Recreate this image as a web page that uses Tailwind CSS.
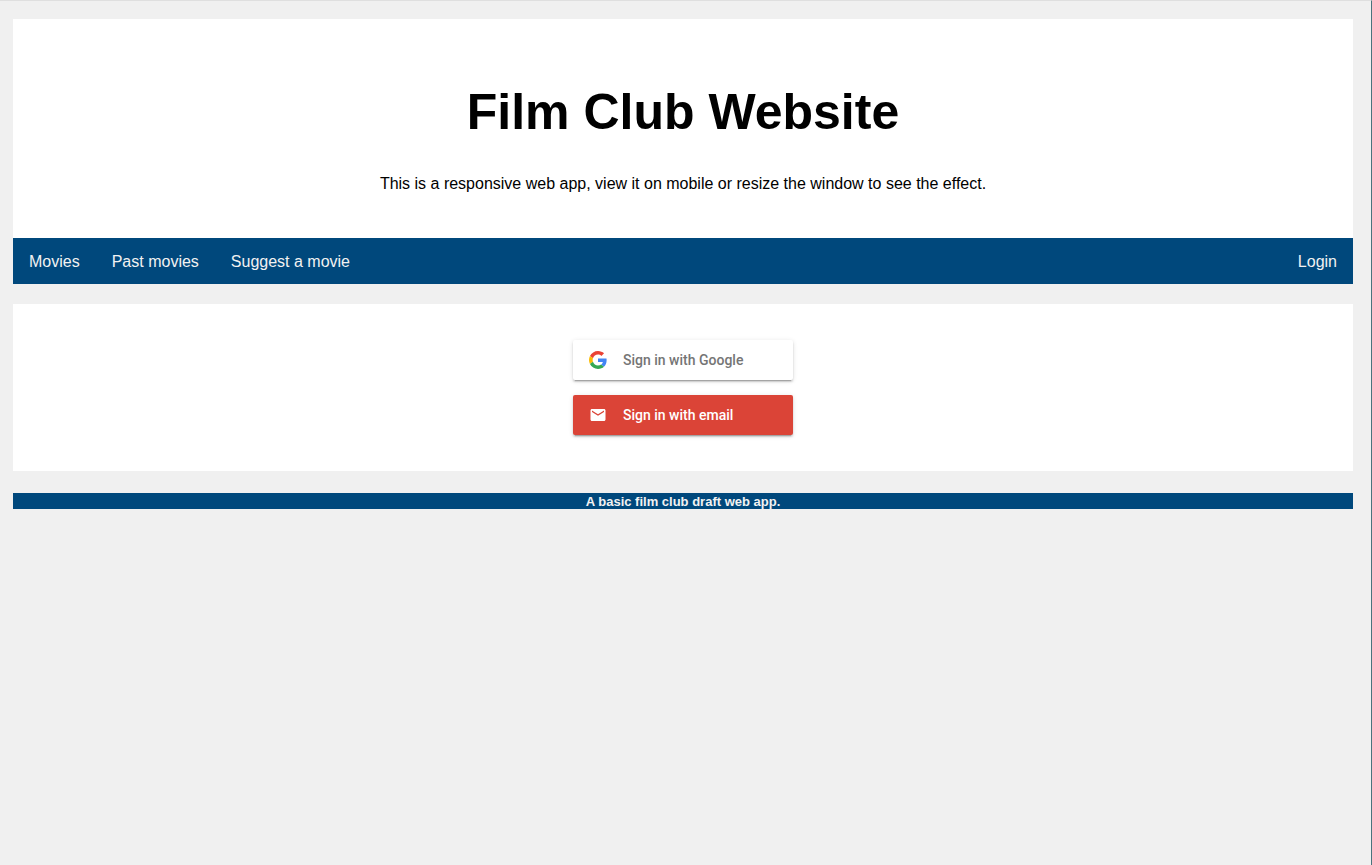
<!DOCTYPE html>
<html lang="en">
<head>
<meta charset="utf-8">
<meta name="viewport" content="width=device-width, initial-scale=1">
<title>Film Club Website</title>
<script src="https://cdn.jsdelivr.net/npm/@tailwindcss/browser@4"></script>
</head>
<body class="min-h-screen border-t border-r border-t-[#dfdfdf] border-r-[#4a737d] bg-[#f0f0f0] pt-[18px] pr-[18px] pl-[13px] font-['Liberation_Sans',Arial,sans-serif] text-base text-black">
  <header class="bg-white px-8 pt-[65px] pb-[45px] text-center">
    <h1 class="text-[50px] leading-[57px] font-bold">Film Club Website</h1>
    <p class="mt-[34px] leading-[18px]">This is a responsive web app, view it on mobile or resize the window to see the effect.</p>
  </header>
  <nav class="flex bg-[#00487c] leading-[18px] text-[#f2f2f2]">
    <a href="#" class="px-4 pt-[15px] pb-[13px]">Movies</a>
    <a href="#" class="px-4 pt-[15px] pb-[13px]">Past movies</a>
    <a href="#" class="px-4 pt-[15px] pb-[13px]">Suggest a movie</a>
    <a href="#" class="ml-auto px-4 pt-[15px] pb-[13px]">Login</a>
  </nav>
  <main class="mt-5 flex flex-col items-center gap-[15px] bg-white py-9 font-[Roboto,sans-serif] text-sm font-medium">
    <button type="button" class="flex h-10 w-[220px] items-center gap-4 rounded-xs bg-white px-4 text-[#757575] shadow-[0_2px_2px_0_rgba(0,0,0,0.14),0_3px_1px_-2px_rgba(0,0,0,0.2),0_1px_5px_0_rgba(0,0,0,0.12)]">
      <svg class="size-[18px]" viewBox="0 0 48 48" aria-hidden="true"><path fill="#EA4335" d="M24 9.5c3.54 0 6.71 1.22 9.21 3.6l6.85-6.85C35.9 2.38 30.47 0 24 0 14.62 0 6.51 5.38 2.56 13.22l7.98 6.19C12.43 13.72 17.74 9.5 24 9.5z"/><path fill="#4285F4" d="M46.98 24.55c0-1.57-.15-3.09-.38-4.55H24v9.02h12.94c-.58 2.96-2.26 5.48-4.78 7.18l7.73 6c4.51-4.18 7.09-10.36 7.09-17.65z"/><path fill="#FBBC05" d="M10.53 28.59c-.48-1.45-.76-2.99-.76-4.59s.27-3.14.76-4.59l-7.98-6.19C.92 16.46 0 20.12 0 24c0 3.88.92 7.54 2.56 10.78l7.97-6.19z"/><path fill="#34A853" d="M24 48c6.48 0 11.93-2.13 15.89-5.81l-7.73-6c-2.15 1.45-4.92 2.3-8.16 2.3-6.26 0-11.57-4.22-13.47-9.91l-7.98 6.19C6.51 42.62 14.62 48 24 48z"/></svg>
      <span>Sign in with Google</span>
    </button>
    <button type="button" class="flex h-10 w-[220px] items-center gap-4 rounded-xs bg-[#db4437] px-4 text-white shadow-[0_2px_2px_0_rgba(0,0,0,0.14),0_3px_1px_-2px_rgba(0,0,0,0.2),0_1px_5px_0_rgba(0,0,0,0.12)]">
      <svg class="size-[18px]" viewBox="0 0 24 24" fill="#fff" aria-hidden="true"><path d="M20 4H4c-1.1 0-1.99.9-1.99 2L2 18c0 1.1.9 2 2 2h16c1.1 0 2-.9 2-2V6c0-1.1-.9-2-2-2zm0 4l-8 5-8-5V6l8 5 8-5v2z"/></svg>
      <span>Sign in with email</span>
    </button>
  </main>
  <footer class="mt-[22px] bg-[#00487c] pt-0.5 text-center text-[13px] leading-[14px] font-bold text-[#f2f2f2]">A basic film club draft web app.</footer>
</body>
</html>
